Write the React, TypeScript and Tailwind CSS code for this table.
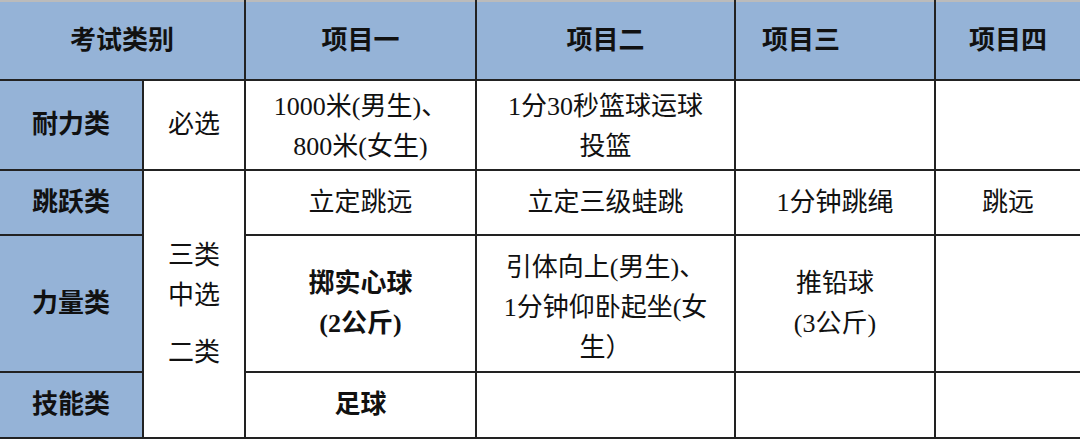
import React from 'react';

const font = { fontFamily: "'Liberation Serif', 'Noto Sans CJK SC', serif" };

const blue = 'bg-[#95b3d7]';
const cell = 'border-2 border-[#222] text-center align-middle p-0';

export default function App() {
  return (
    <div className="w-[1080px] h-[439px] bg-white overflow-hidden text-[#111]" style={font}>
      <table className="table-fixed border-collapse w-[1080px] text-[26px] leading-[40px]">
        <colgroup>
          <col className="w-[143px]" />
          <col className="w-[102px]" />
          <col className="w-[231px]" />
          <col className="w-[259px]" />
          <col className="w-[200px]" />
          <col className="w-[145px]" />
        </colgroup>
        <tbody>
          <tr className="h-[79px]">
            <td colSpan={2} className={`${cell} ${blue} font-bold border-t-[#bbb] border-l-0`}>考试类别</td>
            <td className={`${cell} ${blue} font-bold border-t-[#bbb]`}>项目一</td>
            <td className={`${cell} ${blue} font-bold border-t-[#bbb]`}>项目二</td>
            <td className={`${cell} ${blue} font-bold border-t-[#bbb] text-left pl-[26px]`}>项目三</td>
            <td className={`${cell} ${blue} font-bold border-t-[#bbb] border-r-0`}>项目四</td>
          </tr>
          <tr className="h-[90px]">
            <td className={`${cell} ${blue} font-bold border-l-0`}>耐力类</td>
            <td className={cell}>必选</td>
            <td className={`${cell} pt-[4px]`}>
              1000米(男生)、
              <br />
              800米(女生)
            </td>
            <td className={`${cell} pt-[4px]`}>
              1分30秒篮球运球
              <br />
              投篮
            </td>
            <td className={cell}></td>
            <td className={`${cell} border-r-0`}></td>
          </tr>
          <tr className="h-[65px]">
            <td className={`${cell} ${blue} font-bold border-l-0`}>跳跃类</td>
            <td rowSpan={3} className={cell}>
              <div>三类</div>
              <div>中选</div>
              <div className="mt-[17px]">二类</div>
            </td>
            <td className={cell}>立定跳远</td>
            <td className={cell}>立定三级蛙跳</td>
            <td className={cell}>1分钟跳绳</td>
            <td className={`${cell} border-r-0`}>跳远</td>
          </tr>
          <tr className="h-[137px]">
            <td className={`${cell} ${blue} font-bold border-l-0`}>力量类</td>
            <td className={`${cell} font-bold`}>
              掷实心球
              <br />
              (2公斤)
            </td>
            <td className={`${cell} pt-[8px]`}>
              引体向上(男生)、
              <br />
              1分钟仰卧起坐(女
              <br />
              生）
            </td>
            <td className={cell}>
              推铅球
              <br />
              (3公斤)
            </td>
            <td className={`${cell} border-r-0`}></td>
          </tr>
          <tr className="h-[66px]">
            <td className={`${cell} ${blue} font-bold border-l-0`}>技能类</td>
            <td className={`${cell} font-bold`}>足球</td>
            <td className={cell}></td>
            <td className={cell}></td>
            <td className={`${cell} border-r-0`}></td>
          </tr>
        </tbody>
      </table>
    </div>
  );
}
